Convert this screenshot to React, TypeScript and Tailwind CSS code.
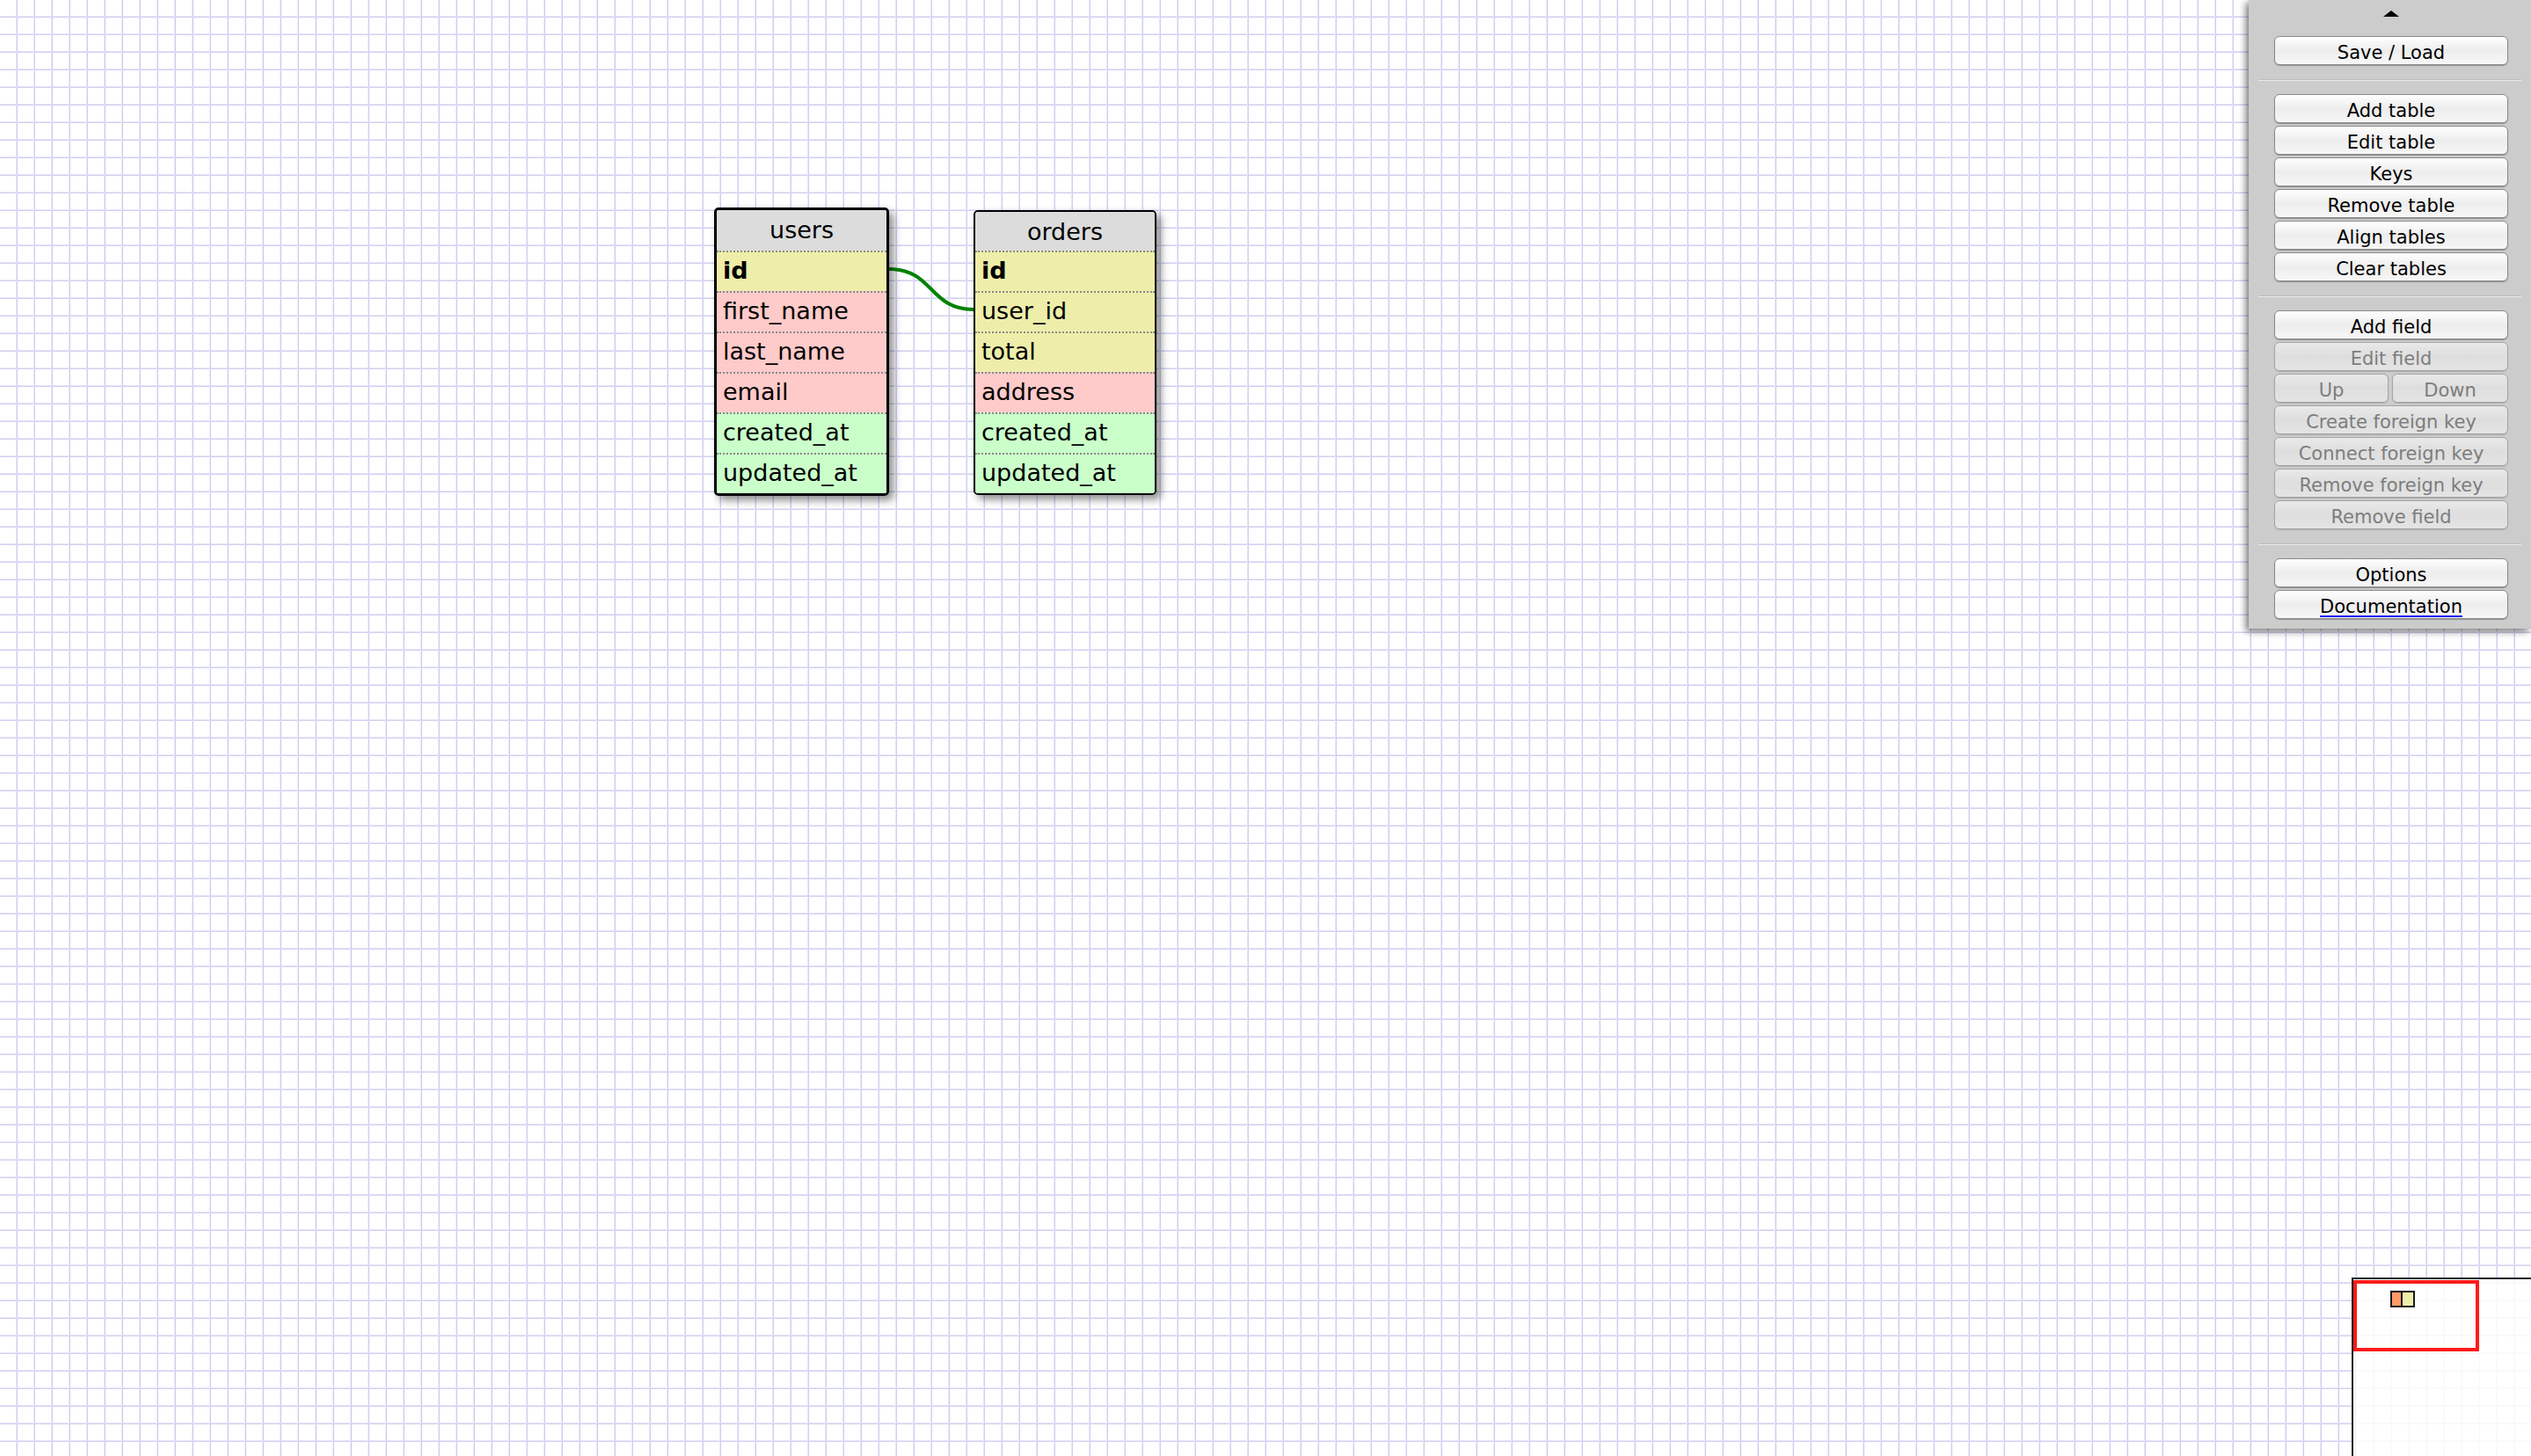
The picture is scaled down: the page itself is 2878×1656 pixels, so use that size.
import React from "react";

// ---------------------------------------------------------------------------
// Schema data
// ---------------------------------------------------------------------------

type FieldKind = "key" | "text" | "stamp";

interface Field {
  name: string;
  kind: FieldKind;
  primary?: boolean;
}

const ROW_BG: Record<FieldKind, string> = {
  key: "bg-[#eeeeaa]",
  text: "bg-[#ffcaca]",
  stamp: "bg-[#caffca]",
};

const USERS: Field[] = [
  { name: "id", kind: "key", primary: true },
  { name: "first_name", kind: "text" },
  { name: "last_name", kind: "text" },
  { name: "email", kind: "text" },
  { name: "created_at", kind: "stamp" },
  { name: "updated_at", kind: "stamp" },
];

const ORDERS: Field[] = [
  { name: "id", kind: "key", primary: true },
  { name: "user_id", kind: "key" },
  { name: "total", kind: "key" },
  { name: "address", kind: "text" },
  { name: "created_at", kind: "stamp" },
  { name: "updated_at", kind: "stamp" },
];

const TABLE_ACTIONS = ["Add table", "Edit table", "Keys", "Remove table", "Align tables", "Clear tables"];

const FIELD_ACTIONS_BOTTOM = ["Create foreign key", "Connect foreign key", "Remove foreign key", "Remove field"];

// ---------------------------------------------------------------------------
// App
// ---------------------------------------------------------------------------

export default function App() {
  return (
    <div className="relative w-[2878px] h-[1656px] overflow-hidden bg-white bg-[linear-gradient(to_right,transparent_18px,#e6e6f8_18px,#e6e6f8_19px,#d0d0f0_19px),linear-gradient(to_bottom,transparent_18px,#e6e6f8_18px,#e6e6f8_19px,#d0d0f0_19px)] bg-[length:20px_20px] font-['DejaVu_Sans',sans-serif] text-black">
      {/* ── Relation line ─────────────────────────────────────────────── */}
      <svg className="absolute left-0 top-0 pointer-events-none" width={2878} height={1656}>
        <path d="M1011 306 C1062 306 1056 352 1107 352" fill="none" stroke="#008200" strokeWidth={4} />
      </svg>

      {/* ── Tables ────────────────────────────────────────────────────── */}
      <div className="absolute left-[812px] top-[236px]">
        <DbTable title="users" fields={USERS} selected />
      </div>
      <div className="absolute left-[1107px] top-[239px]">
        <DbTable title="orders" fields={ORDERS} />
      </div>

      <Sidebar />
      <Minimap />
    </div>
  );
}

// ---------------------------------------------------------------------------
// DbTable
// ---------------------------------------------------------------------------

function DbTable({ title, fields, selected = false }: { title: string; fields: Field[]; selected?: boolean }) {
  return (
    <div
      className={
        selected
          ? "w-[199px] rounded-[5px] border-[3px] border-black overflow-hidden shadow-[5px_5px_10px_rgba(0,0,0,0.45)]"
          : "w-[208px] rounded-[5px] border-2 border-black overflow-hidden shadow-[5px_5px_10px_rgba(0,0,0,0.45)]"
      }
    >
      <div
        className={
          selected
            ? "h-[46px] bg-[#dcdcdc] text-center text-[27px] leading-[46px]"
            : "h-[44px] bg-[#dcdcdc] text-center text-[27px] leading-[46px]"
        }
      >
        {title}
      </div>
      {fields.map((f) => (
        <div
          key={f.name}
          className={`h-[46px] border-t-2 border-dotted border-[#888888] pl-[7px] text-[27px] leading-[42px] ${ROW_BG[f.kind]} ${
            f.primary ? "font-bold" : ""
          }`}
        >
          {f.name}
        </div>
      ))}
    </div>
  );
}

// ---------------------------------------------------------------------------
// Sidebar
// ---------------------------------------------------------------------------

function Sidebar() {
  return (
    <div className="absolute right-0 top-0 w-[321px] h-[715px] bg-[#cccccc] shadow-[-3px_3px_8px_rgba(0,0,0,0.55)] pt-[12px] pl-[29px] pr-[26px] flex flex-col">
      {/* Collapse arrow */}
      <div className="flex justify-center">
        <div className="w-0 h-0 border-l-[9px] border-r-[9px] border-b-[7px] border-l-transparent border-r-transparent border-b-black" />
      </div>

      <div className="mt-[22px]">
        <PanelButton label="Save / Load" />
      </div>

      <Separator />

      <div className="flex flex-col gap-[3px]">
        {TABLE_ACTIONS.map((a) => (
          <PanelButton key={a} label={a} />
        ))}
      </div>

      <Separator />

      <div className="flex flex-col gap-[3px]">
        <PanelButton label="Add field" />
        <PanelButton label="Edit field" disabled />
        <div className="flex gap-[4px]">
          <div className="w-[130px]">
            <PanelButton label="Up" disabled />
          </div>
          <div className="flex-1">
            <PanelButton label="Down" disabled />
          </div>
        </div>
        {FIELD_ACTIONS_BOTTOM.map((a) => (
          <PanelButton key={a} label={a} disabled />
        ))}
      </div>

      <Separator />

      <div className="flex flex-col gap-[3px]">
        <PanelButton label="Options" />
        <PanelButton label="Documentation" link />
      </div>
    </div>
  );
}

function Separator() {
  return <div className="-ml-[18px] -mr-[15px] mt-[16px] mb-[15px] h-[2px] bg-[#ececec] border-t border-[#bdbdbd]" />;
}

function PanelButton({ label, disabled = false, link = false }: { label: string; disabled?: boolean; link?: boolean }) {
  return (
    <div
      className={
        disabled
          ? "h-[33px] rounded-[6px] border border-[#a4a4a4] bg-gradient-to-b from-[#e9e9e9] via-[#dedede] to-[#e4e4e4] text-center text-[21px] leading-[30px] pt-[3px] text-[#7d7d7d] shadow-[0_1px_1px_rgba(0,0,0,0.15)]"
          : "h-[33px] rounded-[6px] border border-[#8a8a8a] bg-gradient-to-b from-white via-[#ededed] to-[#f7f7f7] text-center text-[21px] leading-[30px] pt-[3px] text-black shadow-[0_1px_1px_rgba(0,0,0,0.3)]"
      }
    >
      <span className={link ? "underline decoration-[#1a1aee] decoration-2 underline-offset-[3px]" : ""}>{label}</span>
    </div>
  );
}

// ---------------------------------------------------------------------------
// Minimap
// ---------------------------------------------------------------------------

function Minimap() {
  return (
    <div className="absolute left-[2674px] top-[1453px] w-[230px] h-[230px] border-2 border-[#1a1a1a] bg-white/85">
      <div className="absolute left-0 top-[1px] w-[143px] h-[81px] border-4 border-[#ff1a1a]" />
      <div className="absolute left-[42px] top-[13px] w-[14px] h-[19px] border-2 border-[#1a1a1a] bg-[#ff9966]" />
      <div className="absolute left-[54px] top-[13px] w-[16px] h-[19px] border-2 border-[#1a1a1a] bg-[#eeeeaa]" />
    </div>
  );
}
